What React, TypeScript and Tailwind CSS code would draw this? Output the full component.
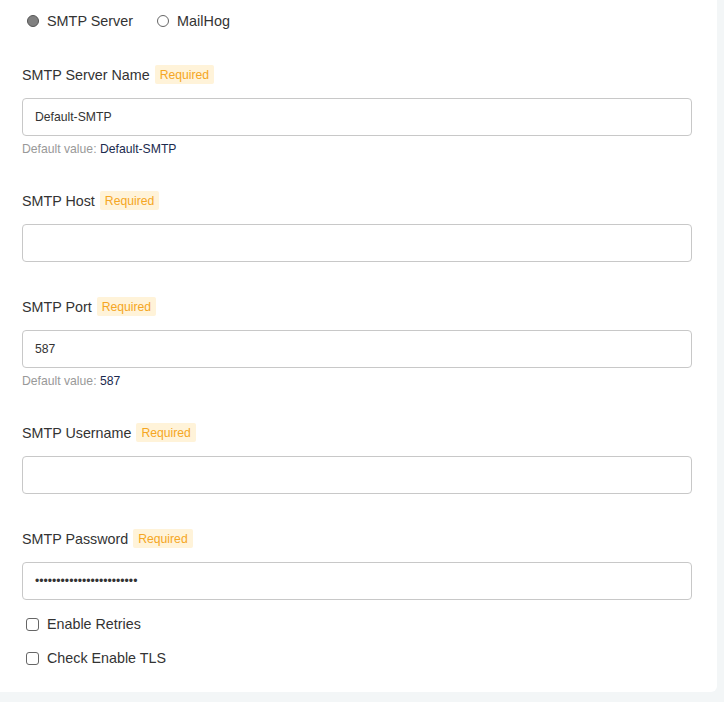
import React from 'react';

const fields = [
	{ label: 'SMTP Server Name', value: 'Default-SMTP', def: 'Default-SMTP' },
	{ label: 'SMTP Host', value: '' },
	{ label: 'SMTP Port', value: '587', def: '587' },
	{ label: 'SMTP Username', value: '' },
	{ label: 'SMTP Password', value: '••••••••••••••••••••••••', last: true },
];

function Radio({ checked, label }: { checked?: boolean; label: string }) {
	return (
		<label className="flex items-center gap-[8px] text-[14.4px] text-[#333]">
			{checked ? (
				<span className="size-[12px] rounded-full border border-[#555] bg-[#808080]" />
			) : (
				<span className="size-[12px] rounded-full border border-[#666] bg-white" />
			)}
			<span className="mt-[2px]">{label}</span>
		</label>
	);
}

function Checkbox({ label }: { label: string }) {
	return (
		<label className="flex h-[20px] items-center gap-[8px] pl-[4px] text-[14.3px] text-[#333]">
			<span className="size-[13px] rounded-[3px] border border-[#666] bg-white" />
			<span className="mt-[2px]">{label}</span>
		</label>
	);
}

export default function App() {
	return (
		<div className="min-h-[702px] bg-[#f3f6f7] font-['Liberation_Sans',Arial,sans-serif]">
			<div className="w-[717px] rounded-br-[6px] bg-white pb-[24px] pl-[22px] pr-[25px] pt-[11px]">
				<div className="flex h-[20px] items-center gap-[24px] pl-[5px]">
					<Radio checked label="SMTP Server" />
					<Radio label="MailHog" />
				</div>

				<div className="mt-[34px]">
					{fields.map((f) => (
						<div key={f.label} className={f.last ? '' : 'mb-[35px]'}>
							<div className="flex h-[19px] items-center gap-[5px]">
								<span className="mt-[2px] text-[14.3px] text-[#333]">{f.label}</span>
								<span className="flex h-[19px] items-center rounded-[2px] bg-[#fff3d9] px-[5px] text-[12.2px] text-[#f5a623]">
									<span className="mt-[1px]">Required</span>
								</span>
							</div>
							<div className="mt-[14px] flex h-[38px] items-center rounded-[4px] border border-[#c8c8c8] bg-white px-[12px] text-[12.2px] text-[#333]">
								{f.value}
							</div>
							{f.def && (
								<div className="mt-[6px] h-[14px] text-[12.2px] leading-[14px] text-[#999]">
									Default value: <span className="font-medium text-[#1b2a4e]">{f.def}</span>
								</div>
							)}
						</div>
					))}
				</div>

				<div className="mt-[14px] flex flex-col gap-[14px]">
					<Checkbox label="Enable Retries" />
					<Checkbox label="Check Enable TLS" />
				</div>
			</div>
		</div>
	);
}
